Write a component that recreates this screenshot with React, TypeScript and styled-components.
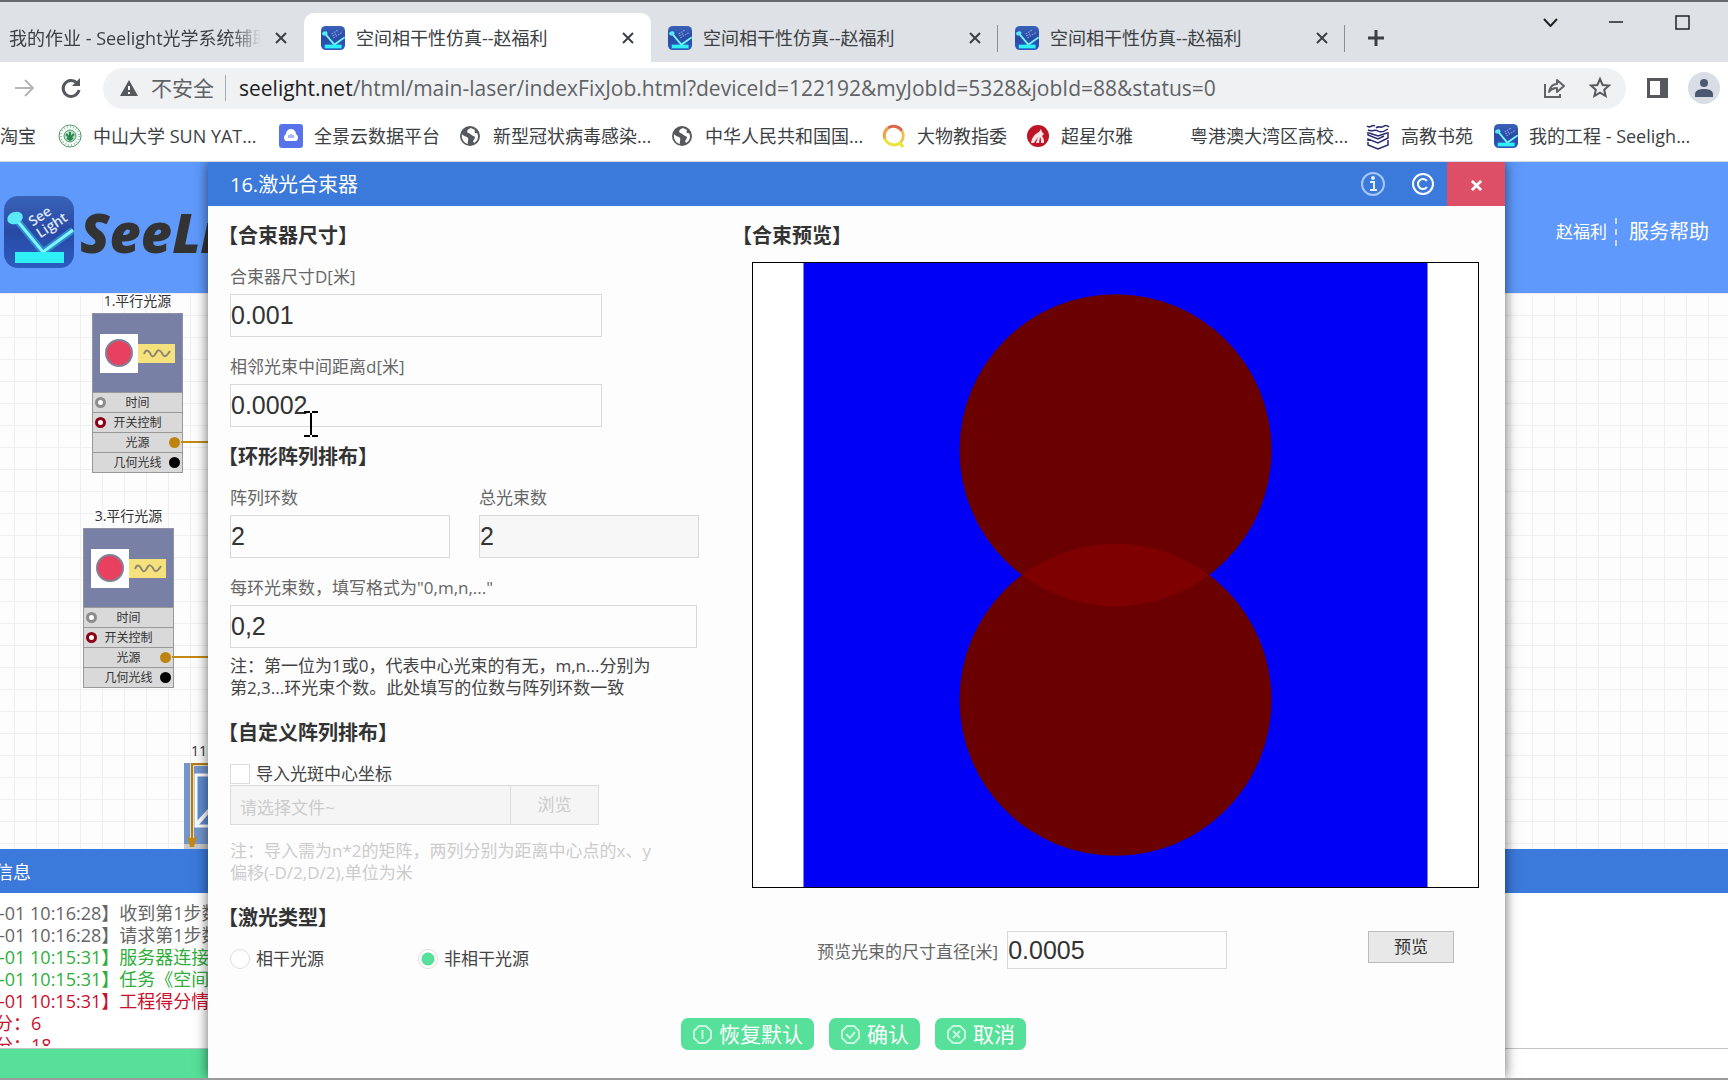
import React from "react";
import styled, { createGlobalStyle, css } from "styled-components";

const SANS = `"Open Sans", "Noto Sans CJK SC", sans-serif`;
const BLUE = "#3b79db";
const SKY = "#5e99fb";
const GREEN = "#57e09a";

const GlobalStyle = createGlobalStyle`
  * { box-sizing: border-box; }
  body { margin: 0; font-family: ${SANS}; font-size: 17px; line-height: 22px; color: #333; background: #fff; overflow: hidden; }
  button, input { font: inherit; color: inherit; margin: 0; }
  button { padding: 0; border: 0; background: none; }
  h1, h2, p, ul { margin: 0; padding: 0; font-size: inherit; font-weight: inherit; }
  a { color: inherit; text-decoration: none; }
  svg { display: block; flex: none; }
`;

const Window = styled.div`
  display: flex;
  flex-direction: column;
  height: 100vh;
  border-bottom: 2px solid #9b9b9b;
`;

/* ---------- browser chrome ---------- */

const TabStrip = styled.div`
  display: flex;
  height: 62px;
  padding-top: 11px;
  background: #dee1e6;
  border-top: 2px solid #66696f;
`;

const TabBox = styled.div<{ $active?: boolean; $first?: boolean; $divided?: boolean }>`
  display: flex;
  align-items: center;
  gap: 11px;
  width: ${(p) => (p.$first ? 304 : 347)}px;
  height: 49px;
  padding: 0 14px 0 ${(p) => (p.$first ? 9 : 17)}px;
  font-size: 18px;
  color: #3c4043;
  ${(p) => p.$active && css`background: #fff; border-radius: 10px 10px 0 0;`}
  ${(p) =>
    p.$divided &&
    css`
      background: linear-gradient(#8a8d91, #8a8d91) right 12px / 1px 27px no-repeat;
    `}
`;

const TabTitle = styled.span<{ $fade?: boolean }>`
  flex: 1;
  min-width: 0;
  overflow: hidden;
  line-height: 26px;
  white-space: nowrap;
  ${(p) => p.$fade && css`mask-image: linear-gradient(to right, #000 88%, transparent);`}
`;

const IconButton = styled.button`
  display: grid;
  place-items: center;
  min-width: 18px;
  height: 24px;
`;

const NewTab = styled(IconButton)`
  width: 62px;
  height: 49px;
`;

const WindowControls = styled.div`
  display: flex;
  gap: 48px;
  margin-left: auto;
  padding-right: 37px;
`;

const WindowButton = styled(IconButton)`
  height: 18px;
`;

const Toolbar = styled.div`
  display: flex;
  align-items: center;
  height: 52px;
  padding: 0 8px 0 13px;
  background: #fff;
`;

const NavButton = styled(IconButton)`
  width: 24px;
  margin-right: 22px;
  &:nth-of-type(2) { margin-right: 20px; }
`;

const AddressBar = styled.div`
  display: flex;
  flex: 1;
  align-items: center;
  height: 41px;
  margin-right: 21px;
  padding: 0 14px 0 17px;
  border-radius: 21px;
  background: #f0f1f2;
  font-size: 21px;
  line-height: 26px;
  color: #5f6368;
`;

const Security = styled.button`
  display: flex;
  align-items: center;
  gap: 13px;
  padding-right: 11px;
  border-right: 1px solid #a7abb0;
`;

const Url = styled.div`
  flex: 1;
  padding-left: 13px;
  white-space: nowrap;
  strong { font-weight: 400; color: #202124; }
`;

const AddressActions = styled.div`
  display: flex;
  gap: 22px;
`;

const Avatar = styled.button`
  display: grid;
  place-items: center;
  width: 32px;
  height: 32px;
  margin-left: 20px;
  border-radius: 50%;
  background: #d9dee6;
`;

const Bookmarks = styled.nav`
  display: flex;
  height: 48px;
  padding-bottom: 4px;
  background: #fff;
  border-bottom: 1px solid #d3dbea;
`;

const Bookmark = styled.a<{ $width: number }>`
  display: flex;
  flex: none;
  align-items: center;
  gap: 11px;
  width: ${(p) => p.$width}px;
  font-size: 18px;
  color: #3c4043;
  white-space: nowrap;
`;

const IconSlot = styled.span`
  display: grid;
  place-items: center;
  width: 24px;
  height: 24px;
`;

/* ---------- application page ---------- */

const Page = styled.main`
  position: relative;
  display: flex;
  flex: 1;
  flex-direction: column;
  min-height: 0;
  overflow: hidden;
`;

const Banner = styled.header`
  display: flex;
  align-items: center;
  height: 131px;
  padding: 8px 19px 0 4px;
  background: ${SKY};
  color: #fff;
`;

const Brand = styled.span`
  margin-left: 6px;
  font: italic 800 54px/60px "Open Sans", sans-serif;
  color: #333;
`;

const UserLinks = styled.div`
  display: flex;
  align-items: center;
  margin-left: auto;
`;

const UserName = styled.a`
  padding-right: 8px;
  line-height: 28px;
  border-right: 2px dashed #c9dcfd;
`;

const HelpLink = styled.a`
  padding-left: 12px;
  font-size: 20px;
  line-height: 28px;
`;

const Canvas = styled.section`
  position: relative;
  flex: 1;
  overflow: hidden;
  background:
    linear-gradient(to right, #f0f0f0 1px, transparent 1px) 14px 0 / 22px 22px,
    linear-gradient(to bottom, #f0f0f0 1px, transparent 1px) 0 22px / 22px 22px,
    #fdfdfd;
`;

const NodeBox = styled.div<{ $x: number; $y: number }>`
  position: absolute;
  left: ${(p) => p.$x}px;
  top: ${(p) => p.$y}px;
  width: 91px;
  font-size: 12px;
`;

const NodeTitle = styled.div`
  height: 22px;
  font-size: 14px;
  line-height: 20px;
  text-align: center;
  white-space: nowrap;
`;

const NodeFace = styled.div`
  display: flex;
  align-items: center;
  justify-content: center;
  height: 80px;
  background: #7880a5;
  border: 1px solid #8f93a3;
`;

const Emitter = styled.div`
  display: grid;
  place-items: center;
  width: 38px;
  height: 39px;
  background: #fff;
`;

const Beam = styled.div`
  display: grid;
  place-items: center;
  width: 37px;
  height: 19px;
  background: #f5e27c;
`;

const PortRow = styled.div`
  position: relative;
  height: 21px;
  border: 1px solid #999;
  margin-top: -1px;
  background: #d9d9d9;
  line-height: 20px;
  text-align: center;
`;

const Port = styled.i<{ $side: "left" | "right"; $color: string; $solid?: boolean }>`
  position: absolute;
  top: 4px;
  ${(p) => p.$side}: 2px;
  width: 11px;
  height: 11px;
  border: 3px solid ${(p) => p.$color};
  border-radius: 50%;
  background: ${(p) => (p.$solid ? p.$color : "#fff")};
`;

const Wire = styled.i`
  position: absolute;
  top: 8px;
  left: 88px;
  width: 60px;
  height: 2px;
  background: #c08a14;
`;

const PartialNode = styled.div`
  position: absolute;
  left: 184px;
  bottom: 0;
  font-size: 14px;
  line-height: 24px;
`;

const PartialTitle = styled.div`
  padding-left: 7px;
`;

const LogPanel = styled.section`
  height: 199px;
  margin-left: -5px;
`;

const LogHeader = styled.h2`
  height: 44px;
  font-size: 18px;
  line-height: 46px;
  background: ${BLUE};
  color: #fff;
`;

const LogList = styled.ul`
  height: 153px;
  padding-top: 9px;
  overflow: hidden;
  list-style: none;
  font-size: 18px;
  white-space: nowrap;
`;

const LogLine = styled.li<{ $color: string; $stamped?: boolean }>`
  padding-left: ${(p) => (p.$stamped ? 4 : 0)}px;
  color: ${(p) => p.$color};
`;

const StatusBar = styled.footer`
  height: 30px;
  border-top: 1px solid #c4c4c4;
`;

const Progress = styled.div`
  width: 50%;
  height: 100%;
  background: ${GREEN};
`;

/* ---------- dialog ---------- */

const Dialog = styled.section`
  position: absolute;
  top: 0;
  bottom: 0;
  left: 208px;
  right: 223px;
  display: flex;
  flex-direction: column;
  background: #fdfdfd;
  box-shadow: 0 0 12px rgba(0, 0, 0, 0.6);
`;

const TitleBar = styled.header`
  display: flex;
  align-items: center;
  height: 44px;
  padding-left: 22px;
  background: ${BLUE};
  color: #fff;
`;

const DialogTitle = styled.h1`
  flex: 1;
  padding-top: 2px;
  font-size: 20px;
`;

const TitleButton = styled(IconButton)`
  width: 24px;
  margin-right: 26px;
`;

const CloseButton = styled.button`
  display: grid;
  place-items: center;
  width: 58px;
  height: 44px;
  margin-left: -14px;
  padding-top: 3px;
  background: #dc4f66;
`;

const Columns = styled.div`
  display: flex;
  flex: 1;
  padding: 14px 26px 0 10px;
`;

const FormColumn = styled.form`
  width: 514px;
`;

const PreviewColumn = styled.div`
  flex: 1;
`;

const Heading = styled.h2`
  height: 30px;
  font-size: 20px;
  line-height: 32px;
  font-weight: 700;
  text-spacing-trim: space-all;
`;

const Group = styled.div<{ $gap?: number }>`
  display: flex;
  flex-direction: column;
  padding: 16px 0 ${(p) => p.$gap ?? 18}px 12px;
`;

const FieldRow = styled.div`
  display: flex;
  gap: 29px;
  margin-bottom: 19px;
`;

const FieldBox = styled.div<{ $spaced?: boolean }>`
  margin-bottom: ${(p) => (p.$spaced ? 19 : 0)}px;
`;

const Label = styled.label`
  display: block;
  margin-bottom: 6px;
  color: #666;
`;

const TextInput = styled.input<{ $width: number; $height?: number }>`
  display: block;
  width: ${(p) => p.$width}px;
  height: ${(p) => p.$height ?? 43}px;
  padding: 0;
  border: 1px solid #d9d9d9;
  outline: 0;
  background: #fdfdfd;
  font-family: "Liberation Sans", Arial, sans-serif;
  font-size: 25px;
  color: #333;
  &:read-only { background: #f7f7f7; }
`;

const Note = styled.p<{ $muted?: boolean }>`
  margin-top: ${(p) => (p.$muted ? 15 : 7)}px;
  color: ${(p) => (p.$muted ? "#ccc" : "#444")};
  white-space: nowrap;
`;

const Choice = styled.label`
  display: flex;
  align-items: center;
  gap: 6px;
  height: 21px;
  color: #444;
`;

const Checkbox = styled.input`
  appearance: none;
  width: 20px;
  height: 20px;
  border: 1px solid #dcdcdc;
  background: #fff;
`;

const Radio = styled.input`
  appearance: none;
  width: 20px;
  height: 20px;
  border: 1px solid #dedede;
  border-radius: 50%;
  background: #fff;
  &:checked { background: radial-gradient(circle, ${GREEN} 6px, #fff 7px); }
`;

const RadioRow = styled.div`
  display: flex;
  gap: 94px;
`;

const FileRow = styled.div`
  display: flex;
  width: 369px;
  height: 40px;
  margin-top: 1px;
  border: 1px solid #dcdcdc;
  background: #f5f5f5;
`;

const FileName = styled.input`
  width: 280px;
  padding: 6px 9px 0;
  border: 0;
  border-right: 1px solid #dcdcdc;
  background: none;
  &::placeholder { color: #ccc; opacity: 1; }
`;

const Browse = styled.button`
  flex: 1;
  color: #ccc;
`;

const PreviewFrame = styled.div`
  height: 626px;
  margin: 12px 0 0 20px;
  border: 1px solid #000;
  background: #fff;
  svg { width: 100%; height: 100%; }
`;

const PreviewControls = styled.div`
  display: flex;
  align-items: flex-start;
  margin: 43px 25px 0 85px;
`;

const InlineLabel = styled.label`
  padding: 10px 9px 0 0;
  color: #666;
`;

const PreviewButton = styled.button`
  width: 86px;
  height: 32px;
  margin-left: auto;
  border: 1px solid #bcbcbc;
  background: #e8e8e8;
`;

const Actions = styled.footer`
  display: flex;
  justify-content: center;
  gap: 15px;
  padding: 0 6px 28px 0;
`;

const ActionButton = styled.button`
  display: flex;
  align-items: center;
  gap: 6px;
  height: 32px;
  padding: 0 11px;
  border-radius: 7px;
  background: ${GREEN};
  color: #fff;
  font-size: 21px;
`;

const Caret = styled.svg`
  position: absolute;
  left: 96px;
  top: 249px;
  pointer-events: none;
`;

/* ---------- drawings ---------- */

const SeeLogo = ({ w = 24, h = 24, lettered = false }: { w?: number; h?: number; lettered?: boolean }) => {
  const id = lettered ? "logo-large" : "logo-small";
  return (
    <svg width={w} height={h} viewBox="0 0 70 72" preserveAspectRatio="none" aria-hidden="true">
      <defs>
        <linearGradient id={id} x1="0" y1="0" x2="0" y2="1">
          <stop offset="0" stopColor="#3a62b8" />
          <stop offset="0.5" stopColor="#2849a4" />
          <stop offset="1" stopColor="#2c5cc0" />
        </linearGradient>
      </defs>
      <rect width="70" height="72" rx="14" fill={`url(#${id})`} />
      <path d="M11 22 L39 56 L69 34" fill="none" stroke="#35b4ea" strokeWidth="7" opacity="0.6" />
      <path d="M11 22 L39 56 L69 34" fill="none" stroke="#7ff6fb" strokeWidth={lettered ? 3 : 5} />
      <ellipse cx="11" cy="22" rx="8" ry="6" fill="#5be9f7" transform="rotate(-20 11 22)" />
      <rect x="11" y="56" width="49" height="11" fill="#2ff0f7" />
      {lettered ? (
        <g fill="#dfe6fa" fontFamily="Open Sans, sans-serif" fontWeight="600" fontSize="14" transform="rotate(-33 40 28)">
          <text x="29" y="24">See</text>
          <text x="29" y="38">Light</text>
        </g>
      ) : (
        <path d="M31 24 L50 12 M36 36 L62 19 M33 30 L46 22" stroke="#8ea2e6" strokeWidth="3" strokeDasharray="5 3" />
      )}
    </svg>
  );
};

const Cross = ({ size = 12, color = "#3c4043", width = 2 }) => (
  <svg width={size} height={size} viewBox="0 0 12 12" stroke={color} strokeWidth={width}>
    <path d="M1 1 L11 11 M11 1 L1 11" />
  </svg>
);

const Globe = () => (
  <svg width="22" height="22" viewBox="0 0 22 22">
    <circle cx="11" cy="11" r="10" fill="#55595e" />
    <path d="M3 9 C5 12 8 11 9 13 C10 15 8 17 9 19 C5 18 2 14 3 9Z" fill="#fff" />
    <path d="M12 3 C9 4 7 6 9 8 C11 8 12 10 14 11 C17 11 16 14 14 16 L15 18 C19 16 20 11 18 8 C16 9 15 7 16 5Z" fill="#fff" />
  </svg>
);

const Seal = () => (
  <svg width="24" height="24" viewBox="0 0 24 24" fill="none" stroke="#4c9a6a">
    <circle cx="12" cy="12" r="11" strokeWidth="1" />
    <circle cx="12" cy="12" r="9" strokeWidth="2" strokeDasharray="1 2" opacity="0.6" />
    <circle cx="12" cy="12" r="6" fill="#b6dcc4" strokeWidth="1" />
    <path d="M8 10 L12 14 L16 10 M9 14 L12 16 L15 14 M12 8 V14" strokeWidth="2" stroke="#2b8552" />
  </svg>
);

const CloudIcon = () => (
  <svg width="24" height="24" viewBox="0 0 24 24">
    <rect width="24" height="24" rx="3" fill="#5873ea" />
    <path d="M7 17 a4 4 0 0 1 0-7 a5 5 0 0 1 10 0 a4 4 0 0 1 0 7Z" fill="#fff" />
    <path d="M10 14 V11 M12 14 V10 M14 14 V11" stroke="#5873ea" strokeWidth="1" />
  </svg>
);

const RingIcon = () => (
  <svg width="24" height="24" viewBox="0 0 24 24" fill="none" strokeWidth="3">
    <path d="M3 15 A10 10 0 0 1 6 4" stroke="#eda34b" />
    <path d="M6 4 A10 10 0 0 1 20 7" stroke="#d9654a" />
    <path d="M20 7 A10 10 0 0 1 18 19" stroke="#f0bf4a" />
    <path d="M3 15 A10 10 0 0 0 18 19 L21 23" stroke="#e8e43c" />
  </svg>
);

const RedBadge = () => (
  <svg width="24" height="24" viewBox="0 0 24 24">
    <circle cx="12" cy="12" r="11" fill="#bd1526" />
    <path d="M5 19 C6 13 9 10 13 8 L15 5 L16 8 L18 10 L16 12 C18 14 18 17 18 19 H15 C15 16 15 14 14 13 L13 19 H10 L12 13 L8 19Z" fill="#fbe4e4" />
  </svg>
);

const BookIcon = () => (
  <svg width="24" height="26" viewBox="0 0 24 26" fill="none" stroke="#2a2a72" strokeWidth="1.500">
    <path d="M1 2 C4 5 6 0 9 2 M10 4 C13 1 15 5 18 2 C20 1 22 2 23 3 M2 6 C6 8 9 5 12 7 C15 9 19 7 22 5" />
    <path d="M2 8 V11 L12 15 L18 12 M2 11 M22 8 V14 L12 19 L2 15 V17 M2 18 V21 L12 25 L22 21 V16" />
    <path d="M3 9 L12 12 L21 9" />
  </svg>
);

const Warning = () => (
  <svg width="18" height="16" viewBox="0 0 18 16">
    <path d="M9 0 L18 16 H0Z" fill="#55595e" />
    <path d="M9 6 V10 M9 12 V14" stroke="#fff" strokeWidth="2" />
  </svg>
);

const ActionIcon = ({ d }: { d: string }) => (
  <svg width="21" height="21" viewBox="0 0 21 21" fill="none" stroke="#c5f7dc" strokeWidth="2">
    <path d="M7 2 H14 L19 7 V14 L14 19 H7 L2 14 V7Z" strokeLinejoin="round" />
    <path d={d} />
  </svg>
);

const BeamPreview = () => (
  <svg viewBox="0 0 1000 1000" role="img" aria-label="合束预览">
    <defs>
      <clipPath id="upper-beam">
        <circle cx="500" cy="300" r="250" />
      </clipPath>
    </defs>
    <rect width="1000" height="1000" fill="#0000f5" />
    <circle cx="500" cy="300" r="250" fill="#6b0000" />
    <circle cx="500" cy="700" r="250" fill="#6b0000" />
    <circle cx="500" cy="700" r="250" fill="#7e0000" clipPath="url(#upper-beam)" />
  </svg>
);

/* ---------- parts ---------- */

const TITLE = "空间相干性仿真--赵福利";

const Tab = ({ active, divided }: { active?: boolean; divided?: boolean }) => (
  <TabBox $active={active} $divided={divided} role="tab" aria-selected={!!active}>
    <SeeLogo />
    <TabTitle>{TITLE}</TabTitle>
    <IconButton aria-label="关闭标签页"><Cross /></IconButton>
  </TabBox>
);

const BOOKMARKS: { text: string; width: number; icon?: React.ReactNode }[] = [
  { text: "中山大学 SUN YAT...", width: 221, icon: <Seal /> },
  { text: "全景云数据平台", width: 179, icon: <CloudIcon /> },
  { text: "新型冠状病毒感染...", width: 212, icon: <Globe /> },
  { text: "中华人民共和国国...", width: 212, icon: <Globe /> },
  { text: "大物教指委", width: 144, icon: <RingIcon /> },
  { text: "超星尔雅", width: 129, icon: <RedBadge /> },
  { text: "粤港澳大湾区高校...", width: 211 },
  { text: "高教书苑", width: 128, icon: <BookIcon /> },
  { text: "我的工程 - Seeligh...", width: 220, icon: <SeeLogo /> },
];

const SourceNode = ({ x, y, title }: { x: number; y: number; title: string }) => (
  <NodeBox $x={x} $y={y}>
    <NodeTitle>{title}</NodeTitle>
    <NodeFace>
      <Emitter>
        <svg width="28" height="28" viewBox="0 0 28 28">
          <circle cx="14" cy="14" r="13" fill="#e7415f" stroke="#80809a" strokeWidth="2" />
        </svg>
      </Emitter>
      <Beam>
        <svg width="28" height="9" viewBox="0 0 28 9" fill="none" stroke="#8c8672" strokeWidth="2">
          <path d="M1 5 C3 0 5 1 7 4 C9 9 11 8 13 4 C15 0 17 1 19 4 C21 9 23 8 27 2" />
        </svg>
      </Beam>
    </NodeFace>
    <PortRow><Port $side="left" $color="#8c8c8c" />时间</PortRow>
    <PortRow><Port $side="left" $color="#8b0016" />开关控制</PortRow>
    <PortRow><Wire /><Port $side="right" $color="#bd8410" $solid />光源</PortRow>
    <PortRow><Port $side="right" $color="#000" $solid />几何光线</PortRow>
  </NodeBox>
);

const LOG: { text: string; color: string; stamped?: boolean }[] = [
  { text: "-01 10:16:28】收到第1步数", color: "#666", stamped: true },
  { text: "-01 10:16:28】请求第1步数", color: "#666", stamped: true },
  { text: "-01 10:15:31】服务器连接成", color: "#2fae3c", stamped: true },
  { text: "-01 10:15:31】任务《空间相", color: "#2fae3c", stamped: true },
  { text: "-01 10:15:31】工程得分情况", color: "#c8102e", stamped: true },
  { text: "分：6", color: "#c8102e" },
  { text: "分：18", color: "#c8102e" },
];

type FieldProps = { id: string; label: string; value: string; width: number; readOnly?: boolean; spaced?: boolean };

const Field = ({ id, label, value, width, readOnly, spaced }: FieldProps) => (
  <FieldBox $spaced={spaced}>
    <Label htmlFor={id}>{label}</Label>
    <TextInput id={id} $width={width} defaultValue={value} readOnly={readOnly} />
  </FieldBox>
);

export default function App() {
  return (
    <Window>
      <GlobalStyle />
      <TabStrip role="tablist">
        <TabBox $first role="tab" aria-selected={false}>
          <TabTitle $fade>我的作业 - Seelight光学系统辅助</TabTitle>
          <IconButton aria-label="关闭标签页"><Cross /></IconButton>
        </TabBox>
        <Tab active />
        <Tab divided />
        <Tab divided />
        <NewTab aria-label="新标签页">
          <svg width="18" height="18" viewBox="0 0 18 18" stroke="#3c4043" strokeWidth="3"><path d="M9 1 V17 M1 9 H17" /></svg>
        </NewTab>
        <WindowControls>
          <WindowButton aria-label="搜索标签页">
            <svg width="15" height="9" viewBox="0 0 15 9" fill="none" stroke="#222" strokeWidth="2"><path d="M1 1 L7.500 8 L14 1" /></svg>
          </WindowButton>
          <WindowButton aria-label="最小化">
            <svg width="14" height="2" viewBox="0 0 14 2"><path d="M0 1 H14" stroke="#222" strokeWidth="1.500" /></svg>
          </WindowButton>
          <WindowButton aria-label="最大化">
            <svg width="15" height="15" viewBox="0 0 15 15" fill="none" stroke="#222" strokeWidth="1.500"><rect x="1" y="1" width="13" height="13" /></svg>
          </WindowButton>
        </WindowControls>
      </TabStrip>

      <Toolbar>
        <NavButton aria-label="前进">
          <svg width="20" height="18" viewBox="0 0 20 18" fill="none" stroke="#b4b6b9" strokeWidth="2"><path d="M0 9 H18 M10 1 L18 9 L10 17" /></svg>
        </NavButton>
        <NavButton aria-label="重新加载">
          <svg width="22" height="22" viewBox="0 0 22 22" fill="none" stroke="#55595e" strokeWidth="3">
            <path d="M17 6 A8 8 0 1 0 19 13" />
            <path d="M20 1 V9 H12Z" fill="#55595e" stroke="none" />
          </svg>
        </NavButton>
        <AddressBar>
          <Security><Warning />不安全</Security>
          <Url role="textbox" aria-label="地址">
            <strong>seelight.net</strong>/html/main-laser/indexFixJob.html?deviceId=122192&amp;myJobId=5328&amp;jobId=88&amp;status=0
          </Url>
          <AddressActions>
            <IconButton aria-label="分享">
              <svg width="23" height="22" viewBox="0 0 23 22" fill="none" stroke="#5f6368" strokeWidth="2">
                <path d="M2 7 V20 H17 V17" />
                <path d="M6 15 C7 10 10 7 14 7 V3 L21 9 L14 15 V11 C11 11 8 12 6 15Z" strokeLinejoin="round" />
              </svg>
            </IconButton>
            <IconButton aria-label="收藏">
              <svg width="24" height="24" viewBox="0 0 24 24" fill="none" stroke="#55595e" strokeWidth="2">
                <path d="M12 3 L14.600 9 L21 9.600 L16.200 13.800 L17.600 20 L12 16.700 L6.400 20 L7.800 13.800 L3 9.600 L9.400 9Z" />
              </svg>
            </IconButton>
          </AddressActions>
        </AddressBar>
        <IconButton aria-label="侧边栏">
          <svg width="21" height="20" viewBox="0 0 21 20">
            <rect width="21" height="20" fill="#55595e" /><rect x="3" y="3" width="10" height="14" fill="#fff" />
          </svg>
        </IconButton>
        <Avatar aria-label="用户">
          <svg width="18" height="18" viewBox="0 0 18 18" fill="#4b5a70">
            <circle cx="9" cy="4" r="4" /><path d="M0 18 V15 C0 11 5 10 9 10 C13 10 18 11 18 15 V18Z" />
          </svg>
        </Avatar>
      </Toolbar>

      <Bookmarks>
        <Bookmark href="#" $width={58}>淘宝</Bookmark>
        {BOOKMARKS.map((b) => (
          <Bookmark href="#" key={b.text} $width={b.width}>
            <IconSlot>{b.icon}</IconSlot>
            {b.text}
          </Bookmark>
        ))}
      </Bookmarks>

      <Page>
        <Banner>
          <SeeLogo w={70} h={72} lettered />
          <Brand>SeeLight</Brand>
          <UserLinks>
            <UserName href="#">赵福利</UserName>
            <HelpLink href="#">服务帮助</HelpLink>
          </UserLinks>
        </Banner>

        <Canvas>
          <SourceNode x={92} y={-2} title="1.平行光源" />
          <SourceNode x={83} y={213} title="3.平行光源" />
          <PartialNode>
            <PartialTitle>11</PartialTitle>
            <svg width="60" height="86" viewBox="0 0 60 86">
              <rect width="60" height="81" fill="#7296cd" />
              <rect y="81" width="60" height="5" fill="#c9c9c9" />
              <rect x="12" y="12" width="48" height="51" fill="#5f8dd2" stroke="#fff" strokeWidth="3" />
              <path d="M13 61 L30 42" stroke="#fff" strokeWidth="4" />
              <path d="M60 1 H8 V76" fill="none" stroke="#f0dcae" strokeWidth="4" />
              <path d="M60 1 H8 V76" fill="none" stroke="#b07d1c" strokeWidth="2" />
              <path d="M3 73 L8 76 L13 73 L10 84 H6Z" fill="#c28a14" />
            </svg>
          </PartialNode>
        </Canvas>

        <LogPanel>
          <LogHeader>信息</LogHeader>
          <LogList>
            {LOG.map((l, i) => (
              <LogLine key={i} $color={l.color} $stamped={l.stamped}>{l.text}</LogLine>
            ))}
          </LogList>
        </LogPanel>
        <StatusBar><Progress /></StatusBar>

        <Dialog role="dialog" aria-labelledby="dialog-title">
          <TitleBar>
            <DialogTitle id="dialog-title">16.激光合束器</DialogTitle>
            <TitleButton aria-label="说明">
              <svg width="24" height="24" viewBox="0 0 24 24" fill="none" stroke="#a9c8fa" strokeWidth="2">
                <circle cx="12" cy="12" r="11" /><path d="M9 10 H13 V18 M9 18 H16" stroke="#e4eeff" /><circle cx="12" cy="6" r="1" stroke="#e4eeff" />
              </svg>
            </TitleButton>
            <TitleButton aria-label="版权">
              <svg width="22" height="22" viewBox="0 0 22 22" fill="none" stroke="#fff" strokeWidth="2">
                <circle cx="11" cy="11" r="10" /><path d="M15 8 A5 5 0 1 0 15 14" />
              </svg>
            </TitleButton>
            <CloseButton aria-label="关闭"><Cross size={11} color="#fff" width={3} /></CloseButton>
          </TitleBar>

          <Columns>
            <FormColumn>
              <Heading>【合束器尺寸】</Heading>
              <Group $gap={14}>
                <Field id="size" label="合束器尺寸D[米]" value="0.001" width={372} spaced />
                <Field id="distance" label="相邻光束中间距离d[米]" value="0.0002" width={372} />
              </Group>
              <Heading>【环形阵列排布】</Heading>
              <Group>
                <FieldRow>
                  <Field id="rings" label="阵列环数" value="2" width={220} />
                  <Field id="total" label="总光束数" value="2" width={220} readOnly />
                </FieldRow>
                <Field id="per-ring" label={'每环光束数，填写格式为"0,m,n,..."'} value="0,2" width={467} />
                <Note>注：第一位为1或0，代表中心光束的有无，m,n...分别为<br />第2,3...环光束个数。此处填写的位数与阵列环数一致</Note>
              </Group>
              <Heading>【自定义阵列排布】</Heading>
              <Group>
                <Choice><Checkbox type="checkbox" />导入光斑中心坐标</Choice>
                <FileRow>
                  <FileName aria-label="文件" placeholder="请选择文件~" disabled />
                  <Browse type="button" disabled>浏览</Browse>
                </FileRow>
                <Note $muted>注：导入需为n*2的矩阵，两列分别为距离中心点的x、y<br />偏移(-D/2,D/2),单位为米</Note>
              </Group>
              <Heading>【激光类型】</Heading>
              <Group>
                <RadioRow>
                  <Choice><Radio type="radio" name="laser" />相干光源</Choice>
                  <Choice><Radio type="radio" name="laser" defaultChecked />非相干光源</Choice>
                </RadioRow>
              </Group>
            </FormColumn>

            <PreviewColumn>
              <Heading>【合束预览】</Heading>
              <PreviewFrame><BeamPreview /></PreviewFrame>
              <PreviewControls>
                <InlineLabel htmlFor="diameter">预览光束的尺寸直径[米]</InlineLabel>
                <TextInput id="diameter" $width={220} $height={38} defaultValue="0.0005" />
                <PreviewButton>预览</PreviewButton>
              </PreviewControls>
            </PreviewColumn>
          </Columns>

          <Actions>
            <ActionButton><ActionIcon d="M10.500 6 V15" />恢复默认</ActionButton>
            <ActionButton><ActionIcon d="M6 10 L10 14 L15 8" />确认</ActionButton>
            <ActionButton><ActionIcon d="M7 7 L14 14 M14 7 L7 14" />取消</ActionButton>
          </Actions>

          <Caret width="14" height="26" viewBox="0 0 14 26" fill="none" stroke="#000" strokeWidth="2">
            <path d="M0 1 H6 M8 1 H14 M7 2 V24 M0 25 H6 M8 25 H14" />
          </Caret>
        </Dialog>
      </Page>
    </Window>
  );
}
